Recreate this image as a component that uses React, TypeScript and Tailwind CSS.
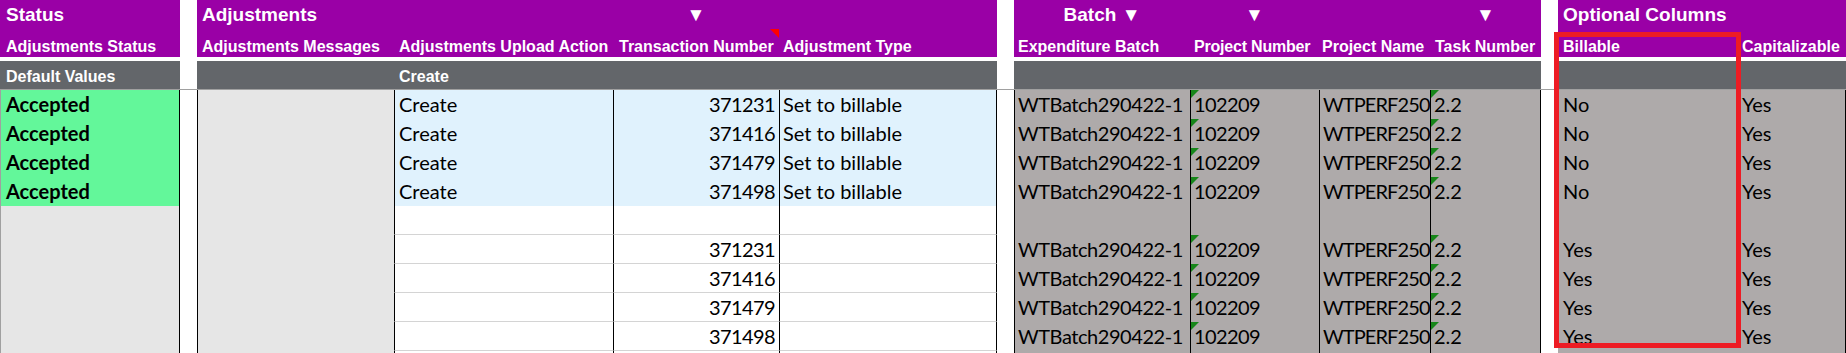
import React from "react";

const GRID =
  "grid grid-cols-[180px_17px_197px_219px_166px_218px_17px_176px_129px_111px_111px_17px_179px_109px]";

type DataRow = {
  status?: string;
  action?: string;
  txn?: string;
  type?: string;
  batch?: boolean;
  bill?: string;
  cap?: string;
  blue?: boolean;
};

const rows: DataRow[] = [
  { status: "Accepted", action: "Create", txn: "371231", type: "Set to billable", batch: true, bill: "No", cap: "Yes", blue: true },
  { status: "Accepted", action: "Create", txn: "371416", type: "Set to billable", batch: true, bill: "No", cap: "Yes", blue: true },
  { status: "Accepted", action: "Create", txn: "371479", type: "Set to billable", batch: true, bill: "No", cap: "Yes", blue: true },
  { status: "Accepted", action: "Create", txn: "371498", type: "Set to billable", batch: true, bill: "No", cap: "Yes", blue: true },
  {},
  { txn: "371231", batch: true, bill: "Yes", cap: "Yes" },
  { txn: "371416", batch: true, bill: "Yes", cap: "Yes" },
  { txn: "371479", batch: true, bill: "Yes", cap: "Yes" },
  { txn: "371498", batch: true, bill: "Yes", cap: "Yes" },
  {},
];

function GreenTri() {
  return (
    <svg className="absolute left-0 top-0 w-[8px] h-[8px]" viewBox="0 0 8 8">
      <polygon points="0,0 8,0 0,8" fill="#17861a" />
    </svg>
  );
}

function Row({ r }: { r: DataRow }) {
  const white = !r.blue;
  const dCell = white
    ? "h-[29px] border-l border-l-black border-b border-b-[#d4d4d4] bg-white"
    : "h-[29px] border-l border-l-black bg-[#e0f2fd]";
  return (
    <div className={`${GRID} h-[29px] font-['Lato',sans-serif] text-[20px] leading-[28px] text-black whitespace-nowrap`}>
      <div
        className={
          r.status
            ? "h-[29px] border-l border-l-[#a0a0a0] border-r border-r-black bg-[#63f79a] pl-[5px] font-bold overflow-hidden"
            : "h-[29px] border-l border-l-[#a0a0a0] border-r border-r-black bg-[#e6e6e6]"
        }
      >
        {r.status}
      </div>
      <div className="h-[29px] bg-white" />
      <div className="h-[29px] border-l border-l-black bg-[#e6e6e6]" />
      <div className={`${dCell} pl-[4px] overflow-hidden`}>{r.action}</div>
      <div className={`${dCell} pr-[4px] text-right tracking-[-0.6px] overflow-hidden`}>{r.txn}</div>
      <div className={`${dCell} border-r border-r-black pl-[3px] overflow-hidden`}>{r.type}</div>
      <div className="h-[29px] bg-white" />
      <div className="h-[29px] border-l border-l-black bg-[#aeaaaa] pl-[3px] tracking-[-0.45px] overflow-hidden">
        {r.batch ? "WTBatch290422-1" : ""}
      </div>
      <div className="relative h-[29px] border-l border-l-black bg-[#aeaaaa] pl-[3px] tracking-[-0.6px] overflow-hidden">
        {r.batch && <GreenTri />}
        {r.batch ? "102209" : ""}
      </div>
      <div className="h-[29px] border-l border-l-black bg-[#aeaaaa] pl-[3px] tracking-[-0.9px] overflow-hidden">
        {r.batch ? "WTPERF250" : ""}
      </div>
      <div className="relative h-[29px] border-l border-l-black border-r border-r-black bg-[#aeaaaa] pl-[3px] overflow-hidden">
        {r.batch && <GreenTri />}
        {r.batch ? "2.2" : ""}
      </div>
      <div className="h-[29px] bg-white" />
      <div className="h-[29px] bg-[#aeaaaa] pl-[5px] overflow-hidden">{r.bill}</div>
      <div className="h-[29px] bg-[#aeaaaa] pl-[5px] border-r border-r-black overflow-hidden">{r.cap}</div>
    </div>
  );
}

export default function App() {
  const h1 = "h-[29px] bg-[#9a00a6] pt-[4px] leading-[22px]";
  const h2 = "h-[28px] bg-[#9a00a6] pt-[9px] leading-[18px]";
  const band = "h-[28px] bg-[#63666a] pt-[7px] leading-[18px]";
  return (
    <div className="relative w-[1846px] h-[353px] overflow-hidden bg-white">
      <div className="font-['Liberation_Sans',Arial,sans-serif] font-bold text-white whitespace-nowrap">
        {/* Header row 1 */}
        <div className={`${GRID} text-[19px]`}>
          <div className={`${h1} pl-[6px]`}>Status</div>
          <div className="h-[29px] bg-white" />
          <div className={`${h1} pl-[5px]`}>Adjustments</div>
          <div className={h1} />
          <div className={`${h1} text-center`}>▼</div>
          <div className={h1} />
          <div className="h-[29px] bg-white" />
          <div className={`${h1} text-center`}>Batch ▼</div>
          <div className={`${h1} text-center`}>▼</div>
          <div className={h1} />
          <div className={`${h1} text-center`}>▼</div>
          <div className="h-[29px] bg-white" />
          <div className={`${h1} pl-[5px] col-span-2`}>Optional Columns</div>
        </div>
        {/* Header row 2 */}
        <div className={`${GRID} text-[16px]`}>
          <div className={`${h2} pl-[6px]`}>Adjustments Status</div>
          <div className="h-[28px] bg-white" />
          <div className={`${h2} pl-[5px]`}>Adjustments Messages</div>
          <div className={`${h2} pl-[5px]`}>Adjustments Upload Action</div>
          <div className={`${h2} relative pl-[6px]`}>
            Transaction Number
            <svg className="absolute right-0 top-0 w-[9px] h-[9px]" viewBox="0 0 9 9">
              <polygon points="0,0 9,0 9,9" fill="#ff0000" />
            </svg>
          </div>
          <div className={`${h2} pl-[4px]`}>Adjustment Type</div>
          <div className="h-[28px] bg-white" />
          <div className={`${h2} pl-[4px]`}>Expenditure Batch</div>
          <div className={`${h2} pl-[4px] tracking-[-0.2px]`}>Project Number</div>
          <div className={`${h2} pl-[3px]`}>Project Name</div>
          <div className={`${h2} pl-[5px]`}>Task Number</div>
          <div className="h-[28px] bg-white" />
          <div className={`${h2} pl-[5px]`}>Billable</div>
          <div className={`${h2} pl-[5px]`}>Capitalizable</div>
        </div>
        <div className="h-[4px] bg-white" />
        {/* Default values band */}
        <div className={`${GRID} text-[16px]`}>
          <div className={`${band} pl-[6px]`}>Default Values</div>
          <div className="h-[28px] bg-white" />
          <div className={band} />
          <div className={`${band} pl-[5px]`}>Create</div>
          <div className={band} />
          <div className={band} />
          <div className="h-[28px] bg-white" />
          <div className={band} />
          <div className={band} />
          <div className={band} />
          <div className={band} />
          <div className="h-[28px] bg-white" />
          <div className={band} />
          <div className={band} />
        </div>
      </div>
      <div className="h-px bg-[#a0a0a0]" />
      {rows.map((r, i) => (
        <Row key={i} r={r} />
      ))}
      <div className="absolute left-[1554px] top-[32px] w-[187px] h-[316px] border-[5px] border-[#ed1c24]" />
    </div>
  );
}
